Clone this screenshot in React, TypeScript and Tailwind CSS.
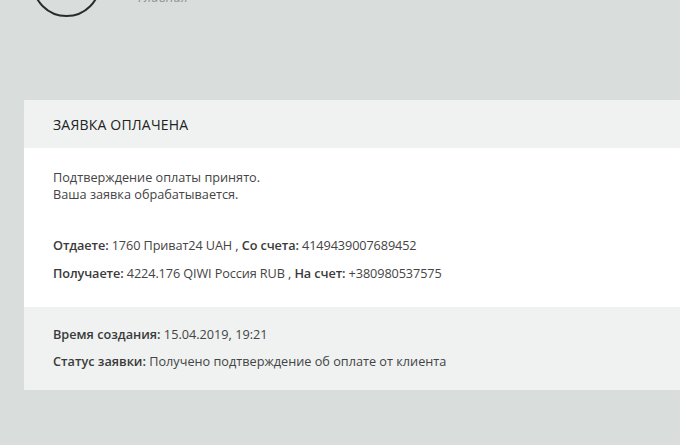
export default function App() {
  return (
    <div className="w-[680px] h-[445px] bg-[#d9dedd] overflow-hidden relative" style={{ fontFamily: '"Open Sans", sans-serif' }}>
      <div className="relative h-[100px]">
        <div className="absolute left-[32px] top-[-52px] w-[69px] h-[69px] rounded-full border-2 border-[#2a2a2a]" />
        <div className="absolute left-[138px] top-[-12px] text-[13px] italic text-[#8b9493]">Гливния</div>
      </div>
      <div className="ml-[24px] bg-white">
        <div className="h-[48px] bg-[#eff2f1] flex items-center pl-[29px] text-[14px] tracking-[0.2px] text-[#222]">ЗАЯВКА ОПЛАЧЕНА</div>
        <div className="pl-[29px] pt-[21px] pb-[25px] text-[12.7px] text-[#444]">
          <div className="leading-[17px]">Подтверждение оплаты принято.<br />Ваша заявка обрабатывается.</div>
          <div className="mt-[34px] leading-[17px] tracking-[-0.1px]">
            <span className="font-semibold text-[#3a3a3a]">Отдаете:</span> 1760 Приват24 UAH , <span className="font-semibold text-[#3a3a3a]">Со счета:</span> 4149439007689452
          </div>
          <div className="mt-[11px] leading-[17px] tracking-[-0.1px]">
            <span className="font-semibold text-[#3a3a3a]">Получаете:</span> 4224.176 QIWI Россия RUB , <span className="font-semibold text-[#3a3a3a]">На счет:</span> +380980537575
          </div>
        </div>
        <div className="bg-[#eff2f1] pl-[29px] pt-[19px] pb-[20px] text-[12.7px] text-[#444]">
          <div className="leading-[17px]"><span className="font-semibold text-[#3a3a3a]">Время создания:</span> 15.04.2019, 19:21</div>
          <div className="mt-[10px] leading-[17px]"><span className="font-semibold text-[#3a3a3a]">Статус заявки:</span> Получено подтверждение об оплате от клиента</div>
        </div>
      </div>
    </div>
  );
}
